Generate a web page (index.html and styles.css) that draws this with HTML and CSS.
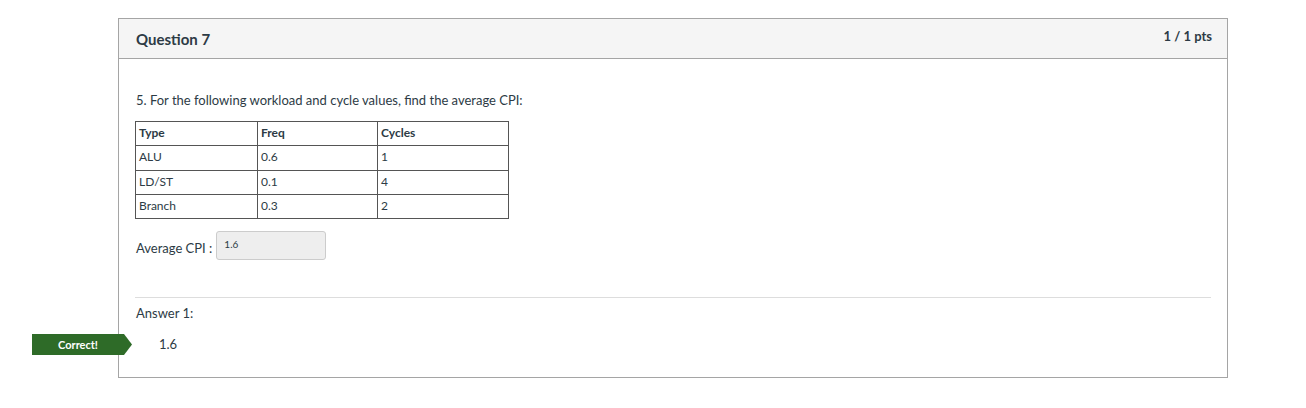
FILE: index.html
```html
<!DOCTYPE html>
<html>
<head>
<meta charset="utf-8">
<link rel="stylesheet" href="styles.css">
</head>
<body>
<div class="page">
  <div class="question">
    <div class="q-header">
      <h2 class="q-title">Question 7</h2>
      <span class="q-points">1 / 1 pts</span>
    </div>
    <div class="q-body">
      <p class="q-text">5. For the following workload and cycle values, find the average CPI:</p>
      <table class="data">
        <colgroup><col class="c1"><col class="c2"><col class="c3"></colgroup>
        <tr><th>Type</th><th>Freq</th><th>Cycles</th></tr>
        <tr><td>ALU</td><td>0.6</td><td>1</td></tr>
        <tr><td>LD/ST</td><td>0.1</td><td>4</td></tr>
        <tr><td>Branch</td><td>0.3</td><td>2</td></tr>
      </table>
      <div class="avg">
        <span class="avg-label">Average CPI :</span>
        <span class="avg-input">1.6</span>
      </div>
      <div class="answers">
        <div class="ans-label">Answer 1:</div>
        <div class="ans-row">
          <span class="badge">Correct!</span>
          <span class="ans-value">1.6</span>
        </div>
      </div>
    </div>
  </div>
</div>
</body>
</html>
```
FILE: styles.css
```css
html, body { margin: 0; padding: 0; background: #fff; }
body { font-family: Lato, "Liberation Sans", sans-serif; color: #2d3b45; }
.page { padding: 18px 78px 0 118px; }
.question {
  position: relative;
  width: 1108px;
  border: 1px solid #a5a5a5;
  height: 358px;
}
.q-header {
  display: flex;
  justify-content: space-between;
  align-items: flex-start;
  height: 40px;
  background: #f5f5f5;
  border-bottom: 1px solid #a5a5a5;
  box-sizing: border-box;
  padding: 0 15px 0 17px;
}
.q-title { margin: 0; font-size: 15px; font-weight: 700; line-height: 18px; padding-top: 11px; }
.q-points { font-size: 13px; font-weight: 700; line-height: 16px; padding-top: 9px; }
.q-body { padding: 33px 16px 0 16px; }
.q-text { margin: 0 0 13px 1px; font-size: 13px; line-height: 16px; }
.data { border-collapse: collapse; border: 1px solid #222; font-size: 12px; line-height: 14px; }
.data col.c1 { width: 122px; }
.data col.c2 { width: 120px; }
.data col.c3 { width: 131px; }
.data th, .data td { border: 1px solid #555; padding: 4px 2px 5px 3px; text-align: left; height: 14.25px; }
.data th { font-weight: 700; }
.avg { display: flex; align-items: center; margin-top: 12px; padding-left: 1px; }
.avg-label { font-size: 13px; margin-right: 4px; margin-top: 4px; }
.avg-input {
  width: 110px; height: 29px; box-sizing: border-box;
  background: #eee; border: 1px solid #ccc; border-radius: 3px;
  font-size: 10px; line-height: 12px; padding: 6px 0 0 7px;
}
.answers { margin-top: 37px; border-top: 1px solid #ddd; padding-top: 7px; }
.ans-label { font-size: 13px; line-height: 16px; padding-left: 1px; }
.ans-row { margin-top: 15px; display: flex; align-items: center; height: 16px; }
.ans-value { font-size: 13px; padding-left: 24px; }
.badge {
  position: absolute; left: -87px; top: 315px;
  width: 100px; height: 21px; box-sizing: border-box;
  background: #2e6b28; color: #fff; font-size: 11px; font-weight: 700;
  display: flex; align-items: center; justify-content: center; padding-right: 8px;
  clip-path: polygon(0 0, 92px 0, 100px 50%, 92px 100%, 0 100%);
}
```
